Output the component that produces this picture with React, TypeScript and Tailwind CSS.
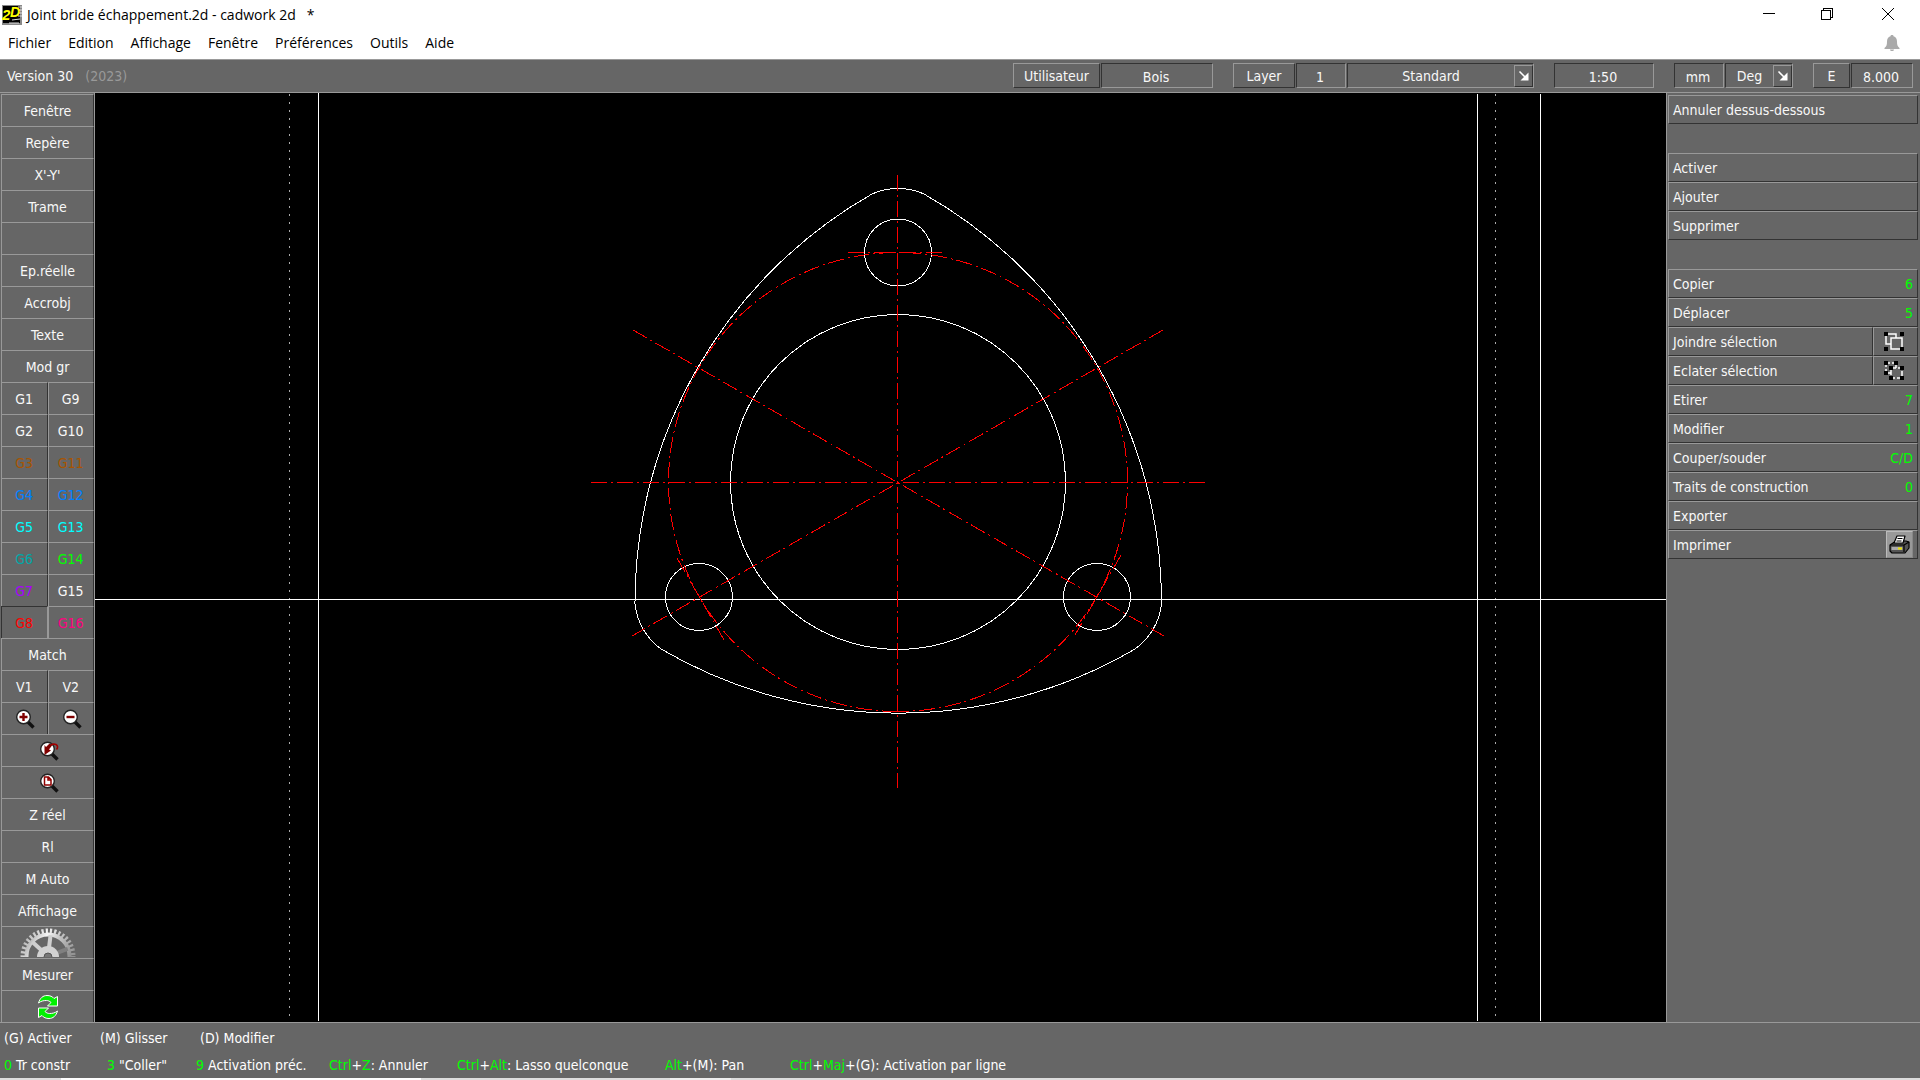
import type { ReactNode } from "react";

const raised = "border border-t-[#999] border-l-[#999] border-r-[#333] border-b-[#333] bg-[#666]";
const sunken = "border border-t-[#333] border-l-[#333] border-r-[#999] border-b-[#999] bg-[#666]";

const menus = ["Fichier", "Edition", "Affichage", "Fenêtre", "Préférences", "Outils", "Aide"];

type Tool = { label: string; color?: string; pressed?: boolean; icon?: ReactNode };

function Lens({ children }: { children: ReactNode }) {
  return (
    <svg width="22" height="22" viewBox="2 3 22 22" fill="none">
      <path d="M17 17l5.5 5.5" stroke="#111" strokeWidth="3.4" />
      <circle cx="12.5" cy="12" r="6.8" fill="#fff" stroke="#222" strokeWidth="1.4" />
      {children}
    </svg>
  );
}

function Gear() {
  const r = (a: number) => (a * Math.PI) / 180;
  return (
    <svg width="60" height="29" viewBox="0 0 60 29" fill="none">
      <defs>
        <linearGradient id="steel" x1="0" y1="0" x2="1" y2="0.6">
          <stop offset="0" stopColor="#9a9a9a" />
          <stop offset="0.35" stopColor="#f4f4f4" />
          <stop offset="0.6" stopColor="#c4c4c4" />
          <stop offset="1" stopColor="#8c8c8c" />
        </linearGradient>
      </defs>
      <circle cx="30" cy="28" r="25" stroke="url(#steel)" strokeWidth="5" strokeDasharray="2.2 2.05" />
      <circle cx="30" cy="28" r="21.5" stroke="url(#steel)" strokeWidth="4" />
      {[222, 277, 340].map((a) => (
        <line
          key={a}
          x1={30 + 8 * Math.cos(r(a))}
          y1={28 + 8 * Math.sin(r(a))}
          x2={30 + 21 * Math.cos(r(a))}
          y2={28 + 21 * Math.sin(r(a))}
          stroke={a === 340 ? "#808080" : "#cfcfcf"}
          strokeWidth="4"
        />
      ))}
      <circle cx="30" cy="29" r="11" fill="#d2d2d2" />
      <circle cx="30" cy="29" r="4" fill="#777" stroke="#555" />
    </svg>
  );
}

function Refresh() {
  return (
    <svg width="22" height="26" viewBox="0 0 22 26" fill="#00f000" stroke="#fff" strokeWidth="1">
      <path d="M1.5 9C3 4 6 1.500 10 1.500c3 0 5.500 1 7 3l3.500-2V12h-10l3.500-3.500C12.500 7 11 6.500 9.500 6.500 6.500 6.500 4 7 1.500 9z" />
      <path d="M20.500 17c-1.500 5-4.500 7.500-8.500 7.500-3 0-5.500-1-7-3L1.500 23.500V14h10L8 17.500c1.500 1.500 3 2 4.500 2 3 0 5.500-.5 8-2.500z" />
    </svg>
  );
}

const zoomIn = <Lens><path d="M8.500 12h8M12.500 8v8" stroke="#800000" strokeWidth="2.400" /></Lens>;
const zoomOut = <Lens><path d="M8.500 12h8" stroke="#800000" strokeWidth="2.400" /></Lens>;
const zoomPrev = (
  <Lens>
    <path d="M13 11c2-3 5-4.500 8-3.500 2 1 2 3.500.5 5" stroke="#a00000" strokeWidth="1.600" />
    <path d="M9.500 8v10l6.500-4.500-2-1 3-4-2.500-2-3.500 3.500z" fill="#800000" />
  </Lens>
);
const zoomPage = (
  <Lens><path d="M9.500 8h4l2.500 2.500V16H9.500zM13 8v3h3" stroke="#900000" strokeWidth="1.500" /></Lens>
);

const tools: Tool[][] = [
  [{ label: "Fenêtre" }],
  [{ label: "Repère" }],
  [{ label: "X'-Y'" }],
  [{ label: "Trame" }],
  [{ label: "" }],
  [{ label: "Ep.réelle" }],
  [{ label: "Accrobj" }],
  [{ label: "Texte" }],
  [{ label: "Mod gr" }],
  [{ label: "G1" }, { label: "G9" }],
  [{ label: "G2" }, { label: "G10" }],
  [{ label: "G3", color: "text-[#a85400]" }, { label: "G11", color: "text-[#a85400]" }],
  [{ label: "G4", color: "text-[#0080ff]" }, { label: "G12", color: "text-[#0080ff]" }],
  [{ label: "G5", color: "text-[#00ffff]" }, { label: "G13", color: "text-[#00ffff]" }],
  [{ label: "G6", color: "text-[#00a8a8]" }, { label: "G14", color: "text-[#00ff00]" }],
  [{ label: "G7", color: "text-[#a800ff]" }, { label: "G15" }],
  [{ label: "G8", color: "text-[#ff0000]", pressed: true }, { label: "G16", color: "text-[#ff0080]" }],
  [{ label: "Match" }],
  [{ label: "V1" }, { label: "V2" }],
  [{ label: "Zoom avant", icon: zoomIn }, { label: "Zoom arrière", icon: zoomOut }],
  [{ label: "Zoom précédent", icon: zoomPrev }],
  [{ label: "Zoom page", icon: zoomPage }],
  [{ label: "Z réel" }],
  [{ label: "Rl" }],
  [{ label: "M Auto" }],
  [{ label: "Affichage" }],
  [{ label: "Réglages", icon: <Gear /> }],
  [{ label: "Mesurer" }],
  [{ label: "Régénérer", icon: <Refresh /> }],
];

function ToolButton({ tool }: { tool: Tool }) {
  const edge = tool.pressed
    ? "border-t-[#333] border-l-[#333] border-r-[#999]"
    : "border-t-[#999] border-l-[#999] border-r-[#333]";
  return (
    <button
      aria-label={tool.label || "Vide"}
      aria-pressed={tool.pressed}
      className={`flex min-w-0 flex-1 items-center justify-center overflow-hidden border-t border-r border-l ${edge} ${tool.color ?? "text-[#f8f8f8]"}`}
    >
      {tool.icon ?? tool.label}
    </button>
  );
}

// top-left corners of the 4px selection handles
const joinDots = [[0, 0], [16, 0], [0, 15], [16, 15]];
const splitDots = [[0, 0], [10, 0], [0, 10], [5, 5], [16, 5], [5, 15], [16, 15]];

function SelectionIcon({ split }: { split?: boolean }) {
  return (
    <svg width="20" height="19" viewBox="0 0 20 19" fill="none">
      <path d="M2 2h10v10H2z" stroke="#fff" strokeWidth="1.5" strokeDasharray={split ? "4 2" : undefined} />
      <path
        d={split ? "M7 7h11v10H7z" : "M7 6h11v11H7z"}
        fill="#666"
        stroke="#fff"
        strokeWidth="1.5"
        strokeDasharray={split ? "5 2" : undefined}
      />
      {(split ? splitDots : joinDots).map(([x, y]) => (
        <rect key={`${x}-${y}`} x={x} y={y} width="4" height="4" fill="#000" />
      ))}
    </svg>
  );
}

function Printer() {
  return (
    <span className="flex h-[27px] w-[27px] items-center justify-center border border-t-[#bbb] border-l-[#bbb] border-r-[#888] border-b-[#888] bg-[#999]">
      <svg width="21" height="19" viewBox="0 0 21 19" stroke="#000" strokeWidth="1.200" strokeLinejoin="round">
        <path d="M4 8l3-2h10l3 1v6l-4 5H3l-2-2v-6z" fill="#555" />
        <path d="M5 8l3-7h8l-2 7z" fill="#fff" />
        <path d="M8.500 3.500h5M7.500 6h5" strokeWidth="1" />
        <path d="M1 10h14l5-3M15 10v7" fill="none" />
        <path d="M2.500 12h11v3h-11z" fill="#aaa" stroke="none" />
        <path d="M9 13.500h4" stroke="#e8e000" strokeWidth="2" />
      </svg>
    </span>
  );
}

type Command = { label: string; hint?: string; side?: ReactNode; print?: boolean };

const commands: (Command | null)[] = [
  { label: "Annuler dessus-dessous" },
  null,
  { label: "Activer" },
  { label: "Ajouter" },
  { label: "Supprimer" },
  null,
  { label: "Copier", hint: "6" },
  { label: "Déplacer", hint: "5" },
  { label: "Joindre sélection", side: <SelectionIcon /> },
  { label: "Eclater sélection", side: <SelectionIcon split /> },
  { label: "Etirer", hint: "7" },
  { label: "Modifier", hint: "1" },
  { label: "Couper/souder", hint: "C/D" },
  { label: "Traits de construction", hint: "0" },
  { label: "Exporter" },
  { label: "Imprimer", print: true },
];

function CommandRow({ command }: { command: Command | null }) {
  if (!command) return <div className="h-[29px]" />;
  return (
    <div className="flex h-[29px]">
      <button className={`flex min-w-0 flex-1 items-center justify-between pr-1 pl-1 text-left ${raised}`}>
        <span>{command.label}</span>
        {command.hint && <span className="text-[#00ff00]">{command.hint}</span>}
        {command.print && <Printer />}
      </button>
      {command.side && (
        <button aria-label={`Options ${command.label}`} className={`flex w-[45px] items-center justify-center pr-1 ${raised}`}>
          {command.side}
        </button>
      )}
    </div>
  );
}

function ArrowButton({ label }: { label: string }) {
  return (
    <button aria-label={label} className={`mt-px flex h-[22px] w-[19px] items-center justify-center ${raised}`}>
      <svg width="12" height="12" viewBox="0 0 12 12">
        <path d="M1.500 1.500L7 7" stroke="#fff" strokeWidth="1.600" />
        <path d="M10.500 2.500v8h-8z" fill="#fff" />
      </svg>
    </button>
  );
}

function Field({ label, value, width }: { label: string; value: string; width: string }) {
  return (
    <input
      aria-label={label}
      defaultValue={value}
      className={`h-[25px] pt-0.5 pr-0.5 text-center text-[#f8f8f8] outline-none ${width} ${sunken}`}
    />
  );
}

function OptionBar() {
  return (
    <div className="flex h-[34px] items-start border-t border-b border-[#999] bg-[#666] pt-[3px] pr-[7px] pl-[7px] text-[#f8f8f8]">
      <div className="flex h-[26px] flex-1 items-center gap-3">
        <span>Version 30</span>
        <span className="text-[#999]">(2023)</span>
      </div>
      <div className="flex gap-5">
        <div className="flex gap-px">
          <button className={`h-[25px] w-[87px] ${raised}`}>Utilisateur</button>
          <Field label="Utilisateur" value="Bois" width="w-[112px]" />
        </div>
        <div className="flex gap-px">
          <button className={`h-[25px] w-[62px] ${raised}`}>Layer</button>
          <Field label="Numéro de layer" value="1" width="w-[50px]" />
          <div className={`flex h-[25px] w-[187px] ${sunken}`}>
            <button className="flex-1">Standard</button>
            <ArrowButton label="Choisir le layer" />
          </div>
        </div>
        <Field label="Echelle" value="1:50" width="w-[100px]" />
        <div className="flex gap-px">
          <Field label="Unité" value="mm" width="w-[50px]" />
          <div className={`flex h-[25px] w-[68px] ${sunken}`}>
            <button className="flex-1">Deg</button>
            <ArrowButton label="Choisir l'unité d'angle" />
          </div>
        </div>
        <div className="flex gap-px">
          <button className={`h-[25px] w-[37px] ${raised}`}>E</button>
          <Field label="Epaisseur" value="8.000" width="w-[62px]" />
        </div>
      </div>
    </div>
  );
}

function Drawing() {
  return (
    <svg
      className="block h-full w-full bg-black"
      viewBox="95 93 1571 929"
      preserveAspectRatio="xMidYMid slice"
      fill="none"
      strokeWidth="1"
      shapeRendering="crispEdges"
    >
      <g stroke="#aaa" strokeDasharray="2 6">
        <path d="M289.500 94V1021" />
        <path d="M1495.500 94V1021" />
      </g>
      <g stroke="#fff">
        <path d="M318.500 93V1021M1477.500 94V1021M1540.500 94V1021M95 599.500H1666" />
        <circle cx="898" cy="482" r="167.500" />
        <circle cx="898" cy="252.500" r="33.500" />
        <circle cx="699" cy="597" r="33.500" />
        <circle cx="1097" cy="597" r="33.500" />
        <path d="M872 194A64 64 0 0 1 924 194A470 470 0 0 1 1161.500 604A64 64 0 0 1 1135 649A470 470 0 0 1 661 649A64 64 0 0 1 635 604A470 470 0 0 1 872 194Z" />
      </g>
      <g stroke="#f00" strokeDasharray="16 4 2 4">
        <path d="M897.500 175V788" />
        <path d="M591 482.500H1205" />
        <path d="M848 252.500H942" />
        <path d="M633 330L1164 636" />
        <path d="M1163 330L632 636" />
        <path d="M677 558L724 640" />
        <path d="M1121 555L1075 635" />
        <path d="M898 711.500A229.500 229.500 0 0 1 898 252.500A229.500 229.500 0 0 1 898 711.500" />
      </g>
    </svg>
  );
}

function Key({ children }: { children: ReactNode }) {
  return <kbd className="font-['DejaVu_Sans_Condensed',sans-serif] text-[#00ff00]">{children}</kbd>;
}

function StatusBar() {
  return (
    <footer className="h-14 border-t border-[#999] bg-[#666] pl-1 whitespace-nowrap text-white">
      <div className="flex h-[29px] items-center">
        <span className="w-24">(G) Activer</span>
        <span className="w-[100px]">(M) Glisser</span>
        <span>(D) Modifier</span>
      </div>
      <div className="flex h-[25px] items-center">
        <span className="w-[103px]"><Key>0</Key> Tr constr</span>
        <span className="w-[89px]"><Key>3</Key> "Coller"</span>
        <span className="w-[133px]"><Key>9</Key> Activation préc.</span>
        <span className="w-32"><Key>Ctrl</Key>+<Key>Z</Key>: Annuler</span>
        <span className="w-52"><Key>Ctrl</Key>+<Key>Alt</Key>: Lasso quelconque</span>
        <span className="w-[125px]"><Key>Alt</Key>+(M): Pan</span>
        <span><Key>Ctrl</Key>+<Key>Maj</Key>+(G): Activation par ligne</span>
      </div>
    </footer>
  );
}

function TitleBar() {
  return (
    <header className="flex h-[59px] justify-between bg-white font-['Open_Sans',sans-serif] text-black">
      <div>
        <div className="flex h-[29px] items-center gap-[5px] pl-0.5">
          <svg width="20" height="20" viewBox="0 0 20 20">
            <rect width="20" height="20" fill="#888" />
            <rect x="1" y="1" width="17" height="17" fill="#000" />
            <path d="M16 2h4M16 5h4M16 8h4M16 11h4M10 15l8-1M7 18h10" stroke="#ddd" />
            <text x="0" y="15" fontSize="15" fontWeight="bold" fontStyle="italic" fontFamily="Liberation Sans" fill="#ff0">2</text>
            <text x="8" y="12" fontSize="14" fontWeight="bold" fontStyle="italic" fontFamily="Liberation Sans" fill="#ff0">D</text>
          </svg>
          <span className="whitespace-pre">Joint bride échappement.2d - cadwork 2d   *</span>
        </div>
        <nav className="flex h-[28px] items-center gap-[17px] pl-2">
          {menus.map((m) => <button key={m}>{m}</button>)}
        </nav>
      </div>
      <div className="flex flex-col items-end">
        <div className="flex h-7 items-center">
          <button aria-label="Réduire" className="flex w-[58px] justify-center">
            <svg width="12" height="12" shapeRendering="crispEdges"><path d="M0 5.500h12" stroke="#000" /></svg>
          </button>
          <button aria-label="Restaurer" className="flex w-[58px] justify-center">
            <svg width="12" height="12" fill="none" stroke="#000" shapeRendering="crispEdges">
              <path d="M.5 2.500h9v9h-9zM2.500 2.500v-2h9v9h-2" />
            </svg>
          </button>
          <button aria-label="Fermer" className="flex w-16 justify-center">
            <svg width="12" height="12" stroke="#000"><path d="M0 0l12 12M12 0L0 12" /></svg>
          </button>
        </div>
        <button aria-label="Notifications" className="mt-[7px] mr-5">
          <svg width="16" height="16" viewBox="0 0 16 16" fill="#aaa">
            <path d="M8 0c1 0 1.500.5 1.500 1.200C12 2 13 4 13 6.500c0 3.500.5 5 2.500 6.500v1H.5v-1C2.500 11.500 3 10 3 6.500 3 4 4 2 6.500 1.200 6.500.5 7 0 8 0zM6 14.500h4c0 1-1 1.500-2 1.500s-2-.5-2-1.500z" />
          </svg>
        </button>
      </div>
    </header>
  );
}

export default function App() {
  return (
    <div className="flex h-screen flex-col overflow-hidden bg-[#ddd] font-['DejaVu_Sans_Condensed',sans-serif] text-[14px] leading-5">
      <TitleBar />
      <OptionBar />
      <main className="flex min-h-0 flex-1">
        <aside className="flex w-[95px] shrink-0 flex-col border-r border-[#999] bg-[#666] pt-px pl-px">
          {tools.map((row, i) => (
            <div key={i} className="flex min-h-0 flex-1">
              {row.map((t) => <ToolButton key={t.label} tool={t} />)}
            </div>
          ))}
        </aside>
        <section className="min-w-0 flex-1">
          <Drawing />
        </section>
        <aside className="w-[254px] shrink-0 border-l border-[#999] bg-[#666] pt-0.5 pr-0.5 pl-px text-[#f8f8f8]">
          {commands.map((c, i) => <CommandRow key={i} command={c} />)}
        </aside>
      </main>
      <StatusBar />
      <div className="flex h-0.5">
        <div className="ml-[61px] w-[360px] bg-white" />
        <div className="ml-[249px] w-[61px] bg-[#eee]" />
      </div>
    </div>
  );
}
